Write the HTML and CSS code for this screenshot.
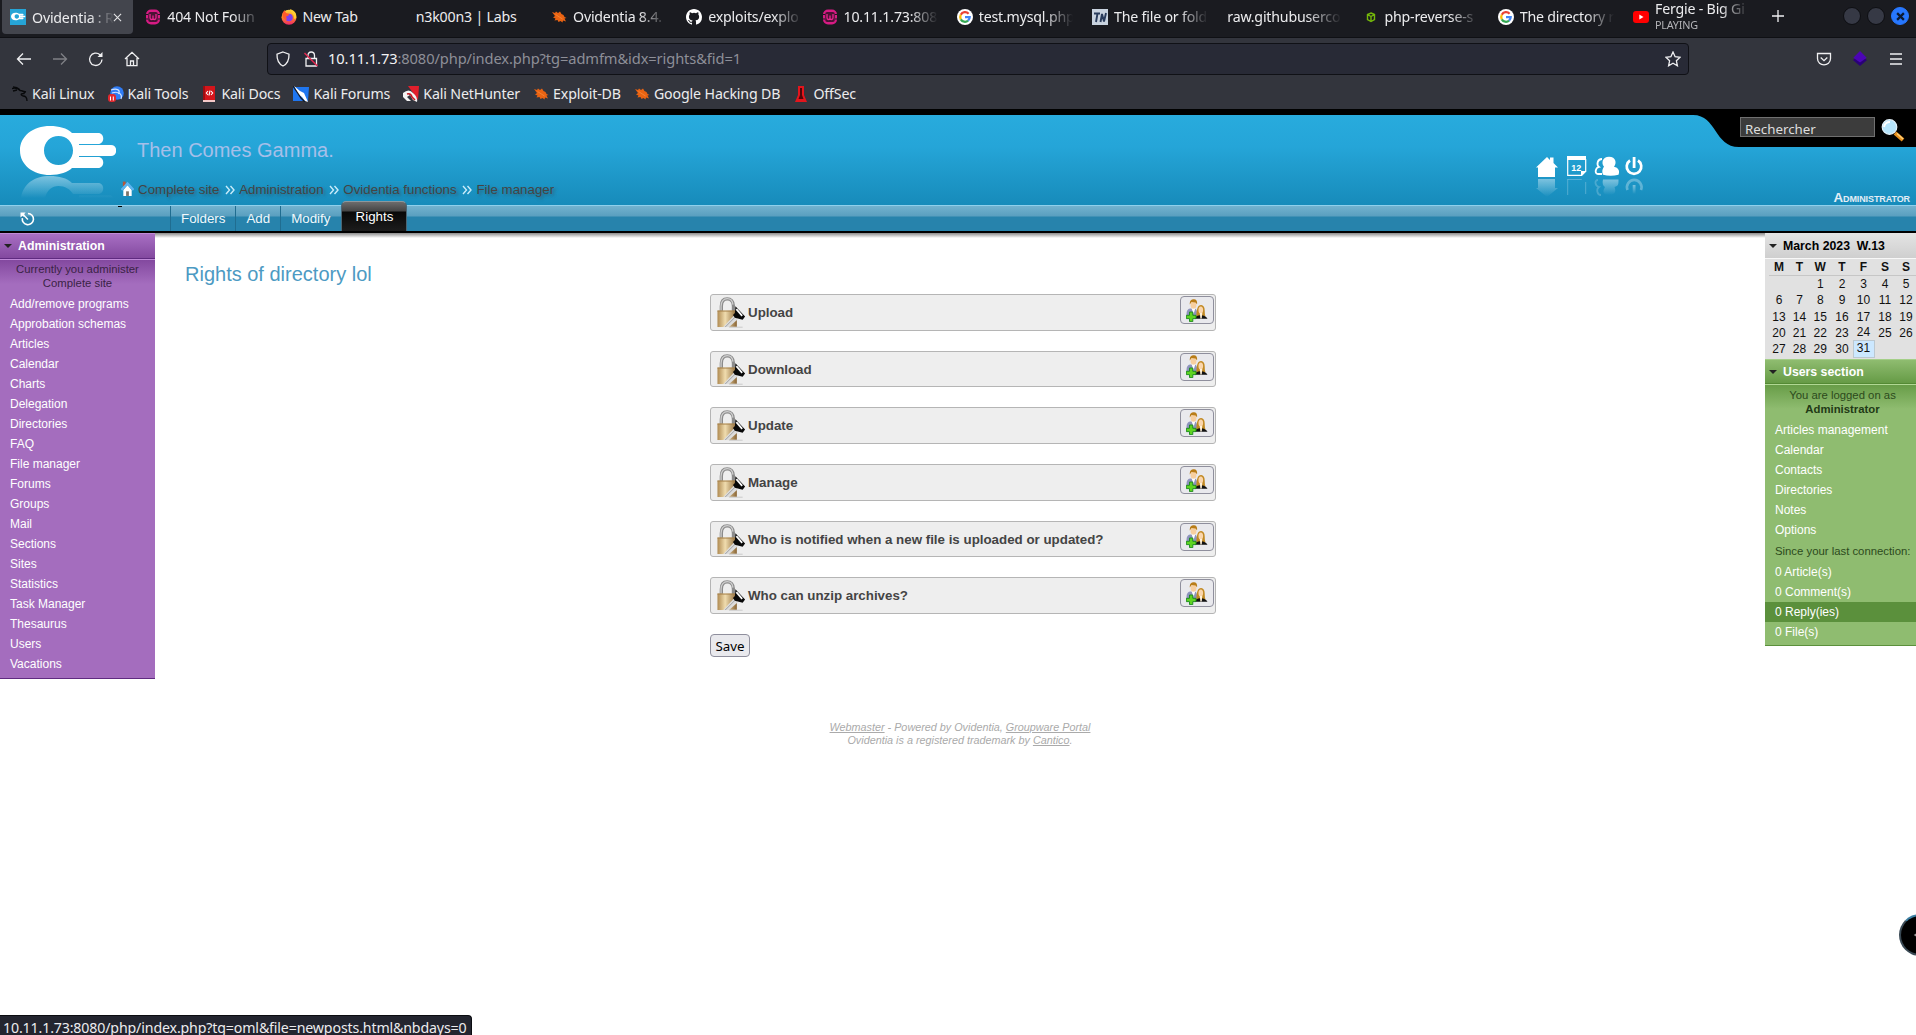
FILE: index.html
```html
<!DOCTYPE html>
<html lang="en">
<head>
<meta charset="utf-8">
<title>Ovidentia : Rights of directory lol</title>
<link rel="stylesheet" href="styles.css">
</head>
<body>
<svg class="defs" width="0" height="0" aria-hidden="true">
  <defs>
    <linearGradient id="brass" x1="0" x2="1"><stop offset="0" stop-color="#b08b52"/><stop offset=".4" stop-color="#f0dcae"/><stop offset="1" stop-color="#8a6534"/></linearGradient>
    <linearGradient id="fade" x1="0" x2="0" y1="0" y2="1"><stop offset="0" stop-color="#fff" stop-opacity=".42"/><stop offset="1" stop-color="#fff" stop-opacity="0"/></linearGradient>
    <linearGradient id="fox" x1="0" x2="0" y1="0" y2="1"><stop offset="0" stop-color="#ffd43a"/><stop offset=".5" stop-color="#ff8a1f"/><stop offset="1" stop-color="#f0246b"/></linearGradient>
    <symbol id="wamp" viewBox="0 0 16 16"><rect x="1" y=".5" width="14" height="15" rx="5" fill="#d81b84"/><path d="M0 5.500h3M0 10h3M13 5.500h3M13 10h3" stroke="#1a1b20" stroke-width="1"/><rect x="3.200" y="3" width="9.600" height="10" rx="2" fill="#4a1234"/><path d="M5 5v3.800q0 1.700 1.500 1.700T8 9V6.500V9q0 1.500 1.500 1.500T11 8.800V5" fill="none" stroke="#e8268f" stroke-width="1.300"/></symbol>
    <symbol id="bug" viewBox="0 0 16 16"><path d="M1 3l3 1 1-1.500L7 4l2-1.500L10.500 5l2 1 1 2 2 1-2 .5 1.500 3-3-1-.5 2-2-1.500-2 1-1-2-3 .5 1-2L2 8.500 4 7z" fill="#ea6312"/><path d="M4.500 5.500l7 4.500" stroke="#f98a3a" stroke-width=".8"/></symbol>
    <symbol id="google" viewBox="0 0 16 16"><circle cx="8" cy="8" r="8" fill="#fff"/><g fill="none" stroke-width="2.300"><path d="M11.600 4.700A4.800 4.800 0 0 0 3.800 5.800" stroke="#ea4335"/><path d="M3.800 5.800a4.800 4.800 0 0 0 0 4.600" stroke="#fbbc05"/><path d="M3.800 10.400a4.800 4.800 0 0 0 7.300 1.200" stroke="#34a853"/><path d="M11.100 11.600A4.800 4.800 0 0 0 12.700 8.100H8" stroke="#4285f4"/></g></symbol>
    <symbol id="lock" viewBox="0 0 30 32"><path d="M4 15V9.500C4 4.500 6.500 2 10 2s6.500 2.500 6.500 7.500V15" fill="none" stroke="#8b8b8b" stroke-width="3.400"/><path d="M3.700 14V9.500C3.700 4.500 6.500 1.800 10 1.800s5.500 2 6 6" fill="none" stroke="#cfcfcf" stroke-width="1.300"/><rect x="0" y="14" width="20" height="17" fill="url(#brass)"/><path d="M0 14.500h20" stroke="#a58149"/><path d="M6 31L17 19l4 4-9 8z" fill="#dcdcdc"/><path d="M8 31L19 20" stroke="#9d9d9d"/><path d="M18.500 9.500L28.500 20l-2.500 3.500-8-2-2-3 2-2z" fill="#080808"/><path d="M19.500 12.500l6 7" stroke="#fff" stroke-width="1.800"/><path d="M12 31.200h14" stroke="#cfcfcf" stroke-width="1.200"/></symbol>
    <symbol id="people" viewBox="0 0 22 23"><path d="M.5 15q0-5 3.500-5.500h4.500q2.500 0 2.500 5v4H.5z" fill="#8d93bd"/><path d="M5.500 9l2 6L9.500 9z" fill="#fff"/><ellipse cx="7.500" cy="6" rx="2.900" ry="3.800" fill="#f7cfa0"/><path d="M3.800 5.500C3.300 1 6-.2 8 .2c2.500 0 3.500 2.300 3 5L9.500 3.500 5.500 3z" fill="#b97d18"/><path d="M10 18.500c.8-2 0-6 1.300-9 1.700-5 6.500-4 7.200 0 .5 3 0 6 1 8z" fill="#c28a24"/><path d="M9 19.800q.5-3.300 5.500-3.500t7 3.500z" fill="#111"/><ellipse cx="14.800" cy="11" rx="2.300" ry="3.600" fill="#fad6ad"/><path d="M13.800 14h2.500l-.6 5.500h-1.300z" fill="#fff1da"/><path d="M3.500 13h3.300v3.300H10v3.300H6.800V22.600H3.500v-3H.3v-3.300h3.200z" fill="#5fd422" stroke="#16881a" stroke-width=".9"/></symbol>
    <symbol id="hand" viewBox="0 0 96 49"><path fill-rule="evenodd" d="M30 0C13 0 0 10 0 24.500S13 49 30 49c10 0 18-3 22-7h26c7 0 7-11 0-11H59v-1h32c7 0 7-11 0-11H59v-1h19c7 0 7-11 0-11H52C47 2 39 0 30 0zM38.500 10c8 0 14.500 6 14.500 14.500S46.500 39 38.500 39 24 33 24 24.500 30.500 10 38.500 10z"/></symbol>
    <symbol id="chev" viewBox="0 0 10 10"><path d="M1 1l3.500 4L1 9M5.500 1L9 5 5.500 9" fill="none" stroke="#c9ecfa" stroke-width="1.400"/></symbol>
  </defs>
</svg>

<div class="browser">
  <div class="tabstrip">
    <div class="tab active"><svg class="fav" viewBox="0 0 16 16"><path fill="#26a4d6" d="M0 0h16v16H0z"/><use href="#hand" x="1" y="3" width="14.500" height="9" fill="#fff"/></svg><span class="label">Ovidentia : R</span><svg class="close" viewBox="0 0 10 10"><path d="M1 1l8 8M9 1L1 9" stroke="#e4e4e6" stroke-width="1.200"/></svg></div>
    <div class="tab"><svg class="fav"><use href="#wamp"/></svg><span class="label">404 Not Foun</span></div>
    <div class="tab"><svg class="fav" viewBox="0 0 16 16"><circle cx="8" cy="8.300" r="7.500" fill="url(#fox)"/><circle cx="8" cy="8.500" r="3.800" fill="#7a3ff0"/><path d="M1.500 4l2-3 1.500 3 3.500 1-1.500 2-2 .5 1 3C3 11 1 8 1.500 4z" fill="#ff5a2c"/><path d="M9 0c5 1.500 7 5 6 9-1 2-2 1-2-1 0-3-3-4-4-8z" fill="#ffcf33"/></svg><span class="label full">New Tab</span></div>
    <div class="tab"><span class="label full wide">n3k00n3 | Labs</span></div>
    <div class="tab"><svg class="fav"><use href="#bug"/></svg><span class="label">Ovidentia 8.4.</span></div>
    <div class="tab"><svg class="fav" viewBox="0 0 16 16"><path fill="#fff" fill-rule="evenodd" d="M8 0C3.580 0 0 3.580 0 8c0 3.540 2.290 6.530 5.470 7.590.4.070.55-.17.55-.38v-1.490c-2.010.37-2.530-.49-2.690-.94-.09-.23-.48-.94-.82-1.130-.28-.15-.68-.52-.01-.53.63-.01 1.080.58 1.230.82.72 1.210 1.870.87 2.330.66.07-.52.28-.87.51-1.070-1.780-.2-3.640-.89-3.640-3.950 0-.87.31-1.590.82-2.150-.08-.2-.36-1.020.08-2.120 0 0 .67-.21 2.200.82a7.500 7.500 0 014 0c1.530-1.040 2.200-.82 2.200-.82.44 1.100.16 1.920.08 2.120.51.56.82 1.270.82 2.150 0 3.070-1.870 3.750-3.650 3.950.29.25.54.73.54 1.480v2.190c0 .21.15.46.55.38A8 8 0 0016 8c0-4.420-3.580-8-8-8z"/></svg><span class="label">exploits/explo</span></div>
    <div class="tab"><svg class="fav"><use href="#wamp"/></svg><span class="label">10.11.1.73:808</span></div>
    <div class="tab"><svg class="fav"><use href="#google"/></svg><span class="label">test.mysql.php</span></div>
    <div class="tab"><svg class="fav" viewBox="0 0 16 16"><path fill="#c9d3df" d="M0 0h16v16H0z"/><path d="M2 4.500h6M5.500 4.500L4 13M8.500 13l1.500-8 2 7.500L14 4" fill="none" stroke="#2a3c5c" stroke-width="1.900"/></svg><span class="label">The file or fold</span></div>
    <div class="tab"><span class="label wide">raw.githubuserco</span></div>
    <div class="tab"><svg class="fav" viewBox="0 0 16 16"><path d="M8 4l3.500 1.500v5L8 12.500l-3.500-2v-5zM4.500 5.500L8 7.500l3.500-2M8 7.500v5" fill="none" stroke="#74b80a" stroke-width="1.400"/></svg><span class="label">php-reverse-s</span></div>
    <div class="tab"><svg class="fav"><use href="#google"/></svg><span class="label">The directory r</span></div>
    <div class="tab"><svg class="fav" viewBox="0 0 16 16"><rect y="2" width="16" height="12" rx="3" fill="#f00"/><path d="M6.300 5.500L10.500 8l-4.200 2.500z" fill="#fff"/></svg><span class="label media">Fergie - Big Gi<small>PLAYING</small></span></div>
    <svg class="newtab" viewBox="0 0 14 14"><path d="M7 1v12M1 7h12" stroke="#f0f0f2" stroke-width="1.300"/></svg>
    <div class="winbtns"><i></i><i></i><i class="x"><svg viewBox="0 0 8 8"><path d="M1 1l6 6M7 1L1 7" stroke="#0c1a33" stroke-width="2"/></svg></i></div>
  </div>

  <div class="toolbar">
    <div class="navbtns">
      <svg viewBox="0 0 16 16"><path d="M15 8H1.500M7 2.500L1.500 8 7 13.500"/></svg>
      <svg class="off" viewBox="0 0 16 16"><path d="M1 8h13.500M9 2.500L14.500 8 9 13.500"/></svg>
      <svg viewBox="0 0 16 16"><path d="M14 8.500A6.200 6.200 0 1 1 12 3.700L13.500 5"/><path d="M14.500 1v5H9.500z" fill="#f0f0f2" stroke="none"/></svg>
      <svg viewBox="0 0 16 16"><path d="M1 8l7-6.700L15 8M3 7v7.700h10V7M6.500 14.500V10h3v4.500"/></svg>
    </div>
    <div class="urlbar">
      <svg viewBox="0 0 16 16"><path d="M8 1l6 2.200C14.200 9 12 13 8 15 4 13 1.800 9 2 3.200z"/></svg>
      <svg class="insecure" viewBox="0 0 16 16"><path d="M3 7.500h10.500V15H3zM5 7.500V4.500q0-3.500 3.200-3.500t3.300 3.500v3"/><path d="M1.500 2l13 13" class="slash"/></svg>
      <span class="url"><b>10.11.1.73</b>:8080/php/index.php?tg=admfm&amp;idx=rights&amp;fid=1</span>
      <svg class="star" viewBox="0 0 16 16"><path d="M8 1l2.100 4.700 5 .6-3.700 3.500 1 5L8 12.300l-4.400 2.500 1-5L.9 6.300l5-.6z"/></svg>
    </div>
    <div class="tools">
      <svg viewBox="0 0 16 16"><path d="M1.500 2.500h13v5c0 8.500-13 8.500-13 0zM4.700 6.500L8 9.700l3.300-3.200"/></svg>
      <svg viewBox="0 0 16 18"><path d="M8 5l8 5-8 7-8-7z" fill="#2a0078" stroke="none"/><path d="M8 0l7.500 7.500L8 13 .5 7.500z" fill="#4c05b5" stroke="none"/></svg>
      <svg viewBox="0 0 16 16"><path d="M2 3h12M2 8h12M2 13h12"/></svg>
    </div>
  </div>

  <div class="bookmarks">
    <a><svg viewBox="0 0 16 16"><path d="M0 2.500c4-1 6 0 8 2 3 0 5 2 4 3-3 0-4 1-1 2.500 3 0 4 2 4 5M1 .8c3 0 5 1 7 3M10 5l4 1M1 5l4-1" fill="none" stroke="#08090b" stroke-width="1.300"/></svg>Kali Linux</a>
    <a><svg viewBox="0 0 16 16"><circle cx="9" cy="7" r="6.800" fill="#2f7cf6"/><path d="M3 4c6-2 9 0 8 3 2 1 3 3 2 6M4 7c3-1 6-1 7 1" fill="none" stroke="#cfe2ff" stroke-width="1.200"/><rect y="8" width="8" height="8" rx="3" fill="#e0282e"/><path d="M2.500 10.500v4M5.300 10.500v4" stroke="#fff"/></svg>Kali Tools</a>
    <a><svg viewBox="0 0 16 16"><path d="M2 0h12v14H2z" fill="#d4151b"/><path d="M2 14h12v2H2z" fill="#f5c9c9"/><path d="M2 0h2v14H2z" fill="#9c0e12"/><path d="M7 5L5.300 7 7 9M10 5l1.700 2L10 9M9 4.500L8 9.500" fill="none" stroke="#fff" stroke-width="1.100"/></svg>Kali Docs</a>
    <a><svg viewBox="0 0 16 16"><path d="M0 1h16l-1 14H0z" fill="#1f76f0"/><path d="M1 0l6 5 4 2 4 9-3-1-3-4-4-3z" fill="#fff"/><path d="M0 0l4 6 4 6 4 4" fill="none" stroke="#111a28" stroke-width="1.300"/></svg>Kali Forums</a>
    <a><svg viewBox="0 0 16 16"><path d="M5 0h11l-1 14z" fill="#e11f2c"/><path d="M0 7q6-5 10 0 5 4 4 9l-4-2-3-5-3 2 4 4-4 0-4-4z" fill="#f4f4f4"/><path d="M4 8q4-1 5 3l3 3" fill="none" stroke="#c31924" stroke-width="1.600"/></svg>Kali NetHunter</a>
    <a><svg><use href="#bug"/></svg>Exploit-DB</a>
    <a><svg><use href="#bug"/></svg>Google Hacking DB</a>
    <a><svg viewBox="0 0 16 16"><path d="M5 0h6v9l3 7H2l3-7z" fill="#e3151c"/><path d="M7 2h2v7l1.500 4h-5L7 9z" fill="#4f060a"/></svg>OffSec</a>
  </div>
</div>

<header class="site">
  <svg class="logo" viewBox="0 0 98 75"><use href="#hand" width="96" height="49" fill="#fff"/><svg y="50" width="98" height="22" viewBox="0 0 98 22"><path fill="url(#fade)" fill-rule="evenodd" d="M1 22C3 8 14 0 30 0c9 0 17 2 22 7h26c7 0 7 11 0 11H53C50 13 45 10 38.500 10S27 14 25 22zM59 19.500h32l3 2.500H59z"/></svg></svg>
  <div class="ident">
    <div class="slogan">Then Comes Gamma.</div>
    <nav class="crumbs">
      <svg class="hm" viewBox="0 0 14 16"><path d="M2 0h3v5H2z" fill="#b5573a"/><path d="M2.500 9L7 4l4.500 5v6.500h-9z" fill="#fff"/><path d="M.5 9L7 2l6.500 7" fill="none" stroke="#5db4f0" stroke-width="2.400"/><path d="M5.500 10.500h3v5h-3z" fill="#7d7468"/></svg>
      <a>Complete site</a><svg><use href="#chev"/></svg><a>Administration</a><svg><use href="#chev"/></svg><a>Ovidentia functions</a><svg><use href="#chev"/></svg><a>File manager</a>
    </nav>
  </div>
  <svg class="shortcuts" viewBox="0 0 110 42">
    <g fill="#fff"><path d="M11 1l3 3V1.500h3.500V7L22 11.500h-3V21H2v-9.500H0z"/>
      <path d="M31 0h19v4H31z"/><path d="M31.700 3v16.300h14l4-4V3" fill="none" stroke="#fff" stroke-width="1.200"/><path d="M45 20v-5h5.500z"/><text x="35.300" y="15" class="day">12</text>
      <path d="M66 3c-5 0-5.500 6-3 8-4 1-4.500 7-1 7h4" fill="none" stroke="#fff" stroke-width="1.800"/><path d="M73 .7c7 0 8 6.500 5 10 4.500 1 6 4 4.500 8q-8 2-15.500 0c-1.500-4 0-6.500 1-8C65 7 66.500.7 73 .7z"/>
      <path d="M94 4.500a7.300 7.300 0 1 0 8 0" fill="none" stroke="#fff" stroke-width="2.700"/><path d="M96.700 1h2.800v11h-2.800z"/></g>
    <g fill="url(#fade)"><path d="M2 23h17v9h3L11 41 0 32h2z"/><path d="M31.700 23v16M49.700 26v12M31.700 23.500h14" stroke="#fff" stroke-opacity=".25" fill="none"/><path d="M67 23.500h15.500c0 5 0 6.500-4 7.500 2 5 0 8-5.500 8s-7-3-4-8c-2-1-3-4-2-7.500z"/><path d="M62 24c-4 0-3 6 1 7-3 2-2 8 2 8" fill="none" stroke="#fff" stroke-opacity=".2" stroke-width="1.800"/><path d="M91.500 34a7.300 7.300 0 1 1 13.500 0" fill="none" stroke="#fff" stroke-opacity=".3" stroke-width="2.700"/><path d="M96.700 29h2.800v9h-2.800z"/></g>
  </svg>
  <div class="account">
    <div class="search">
      <svg class="curve" viewBox="0 0 50 32"><path d="M0 0C24 0 21 32 46 32H50V0z"/></svg>
      <div class="field">Rechercher</div>
      <svg class="glass" viewBox="0 0 24 24"><path d="M14 14l8 7" stroke="#e8901d" stroke-width="4"/><path d="M16 14.500l6 5.500" stroke="#ffd37e" stroke-width="1.300"/><circle cx="8.500" cy="8" r="7.300" fill="#b5e4fb" stroke="#e4f2fa" stroke-width="1.200"/><path d="M3 8q1-5 6-5" fill="none" stroke="#fff" stroke-width="2"/></svg>
    </div>
    <div class="user">Administrator</div>
  </div>
</header>

<nav class="menu">
  <div class="history"><svg viewBox="0 0 15 15"><path d="M8 1.600A6 6 0 1 1 2 6.500" fill="none" stroke="#fff" stroke-width="1.700"/><path d="M0 .5h5.500L3.800 2.300 5 3.500 3.500 5 2.200 4 0 6z" fill="#fff"/><path d="M4 4l4 4" stroke="#fff" stroke-width="1.500"/></svg><i></i></div>
  <a>Folders</a><a>Add</a><a>Modify</a><a class="current">Rights</a>
</nav>

<div class="page">
  <aside class="section admin">
    <h2><i></i>Administration</h2>
    <div class="body">
      <p class="info">Currently you administer<br>Complete site</p>
      <ul>
        <li>Add/remove programs</li><li>Approbation schemas</li><li>Articles</li><li>Calendar</li><li>Charts</li><li>Delegation</li><li>Directories</li><li>FAQ</li><li>File manager</li><li>Forums</li><li>Groups</li><li>Mail</li><li>Sections</li><li>Sites</li><li>Statistics</li><li>Task Manager</li><li>Thesaurus</li><li>Users</li><li>Vacations</li>
      </ul>
    </div>
  </aside>

  <main>
    <h1>Rights of directory lol</h1>
    <form class="rights">
      <div class="acl"><svg class="lk"><use href="#lock"/></svg><span>Upload</span><div class="add"><svg><use href="#people"/></svg></div></div>
      <div class="acl"><svg class="lk"><use href="#lock"/></svg><span>Download</span><div class="add"><svg><use href="#people"/></svg></div></div>
      <div class="acl"><svg class="lk"><use href="#lock"/></svg><span>Update</span><div class="add"><svg><use href="#people"/></svg></div></div>
      <div class="acl"><svg class="lk"><use href="#lock"/></svg><span>Manage</span><div class="add"><svg><use href="#people"/></svg></div></div>
      <div class="acl"><svg class="lk"><use href="#lock"/></svg><span>Who is notified when a new file is uploaded or updated?</span><div class="add"><svg><use href="#people"/></svg></div></div>
      <div class="acl"><svg class="lk"><use href="#lock"/></svg><span>Who can unzip archives?</span><div class="add"><svg><use href="#people"/></svg></div></div>
      <div class="save">Save</div>
    </form>
    <footer><u>Webmaster</u> - Powered by Ovidentia, <u>Groupware Portal</u><br>Ovidentia is a registered trademark by <u>Cantico</u>.</footer>
  </main>

  <div class="rightcol">
    <section class="section cal">
      <h2><i></i>March 2023 &nbsp;W.13</h2>
      <div class="days head"><b>M</b><b>T</b><b>W</b><b>T</b><b>F</b><b>S</b><b>S</b></div>
      <div class="days">
        <span></span><span></span><span>1</span><span>2</span><span>3</span><span>4</span><span>5</span>
        <span>6</span><span>7</span><span>8</span><span>9</span><span>10</span><span>11</span><span>12</span>
        <span>13</span><span>14</span><span>15</span><span>16</span><span>17</span><span>18</span><span>19</span>
        <span>20</span><span>21</span><span>22</span><span>23</span><span class="lift">24</span><span>25</span><span>26</span>
        <span>27</span><span>28</span><span>29</span><span>30</span><span class="today">31</span><span></span><span></span>
      </div>
    </section>
    <section class="section users">
      <h2><i></i>Users section</h2>
      <div class="body">
        <p class="info">You are logged on as<br><b>Administrator</b></p>
        <ul><li>Articles management</li><li>Calendar</li><li>Contacts</li><li>Directories</li><li>Notes</li><li>Options</li></ul>
        <p class="since">Since your last connection:</p>
        <ul><li>0 Article(s)</li><li>0 Comment(s)</li><li class="hover">0 Reply(ies)</li><li>0 File(s)</li></ul>
      </div>
    </section>
  </div>
</div>

<div class="handle"><svg viewBox="0 0 8 10"><path d="M8 0v10L1 5z" fill="#999"/></svg></div>
<div class="status">10.11.1.73:8080/php/index.php?tg=oml&amp;file=newposts.html&amp;nbdays=0</div>
</body>
</html>
```
FILE: styles.css
```css
* { box-sizing: border-box; }
body { margin: 0; height: 1035px; overflow: hidden; position: relative; background: #fff; font-family: "Liberation Sans", Arial, sans-serif; font-size: 12px; }
h1, h2, p, ul { margin: 0; padding: 0; }
ul { list-style: none; }
svg { display: block; flex: none; }
.defs { position: absolute; }

/* browser window */
.browser { height: 109px; background: #33353d; color: #ececee; font: 14.2px "Noto Sans", sans-serif; letter-spacing: -.2px; }
.tabstrip { height: 38px; display: flex; background: #1a1b20; border-bottom: 1px solid #0f1014; padding-left: 2px; }
.tab { width: 135.25px; height: 33px; flex: none; display: flex; align-items: center; padding-left: 8px; }
.tab .fav { width: 16px; height: 16px; margin-right: 6px; }
.tab.active { width: 131px; margin-right: 4.25px; height: 34px; background: #43454d; border-radius: 0 0 4px 4px; }
.tab .label { width: 96px; height: 33px; line-height: 33px; white-space: nowrap; -webkit-mask-image: linear-gradient(90deg, #000 68%, transparent 98%); mask-image: linear-gradient(90deg, #000 68%, transparent 98%); }
.tab .label.wide { width: 117px; }
.tab .label.full { -webkit-mask-image: none; mask-image: none; }
.tab.active .label { width: 84px; }
.tab .close { width: 9px; height: 9px; margin-left: -3px; }
.tab .media { line-height: 17px; }
.media small { display: block; font-size: 10.800px; line-height: 15px; color: #b4b4b8; }
.newtab { width: 14px; height: 14px; margin: 9px 0 0 11px; }
.winbtns { margin: 7px 7px 0 auto; display: flex; gap: 6px; }
.winbtns i { width: 18px; height: 18px; border-radius: 50%; background: #363945; border: 1px solid #0d0e12; display: flex; align-items: center; justify-content: center; }
.winbtns .x { background: #2777ff; border-color: #2777ff; }
.winbtns svg { width: 9px; height: 9px; }

.toolbar { height: 40px; display: flex; align-items: center; padding-top: 1px; }
.toolbar svg { width: 16px; height: 16px; fill: none; stroke: #f0f0f2; stroke-width: 1.300; }
.navbtns { width: 267px; padding-left: 16px; display: flex; gap: 20px; }
.navbtns .off { opacity: .4; }
.urlbar { width: 1422px; height: 32px; margin-top: 1px; background: #282a36; border: 1px solid #101116; border-radius: 4px; display: flex; align-items: center; padding: 0 7px; }
.urlbar .insecure { margin: 0 9px 0 12px; }
.urlbar .slash { stroke: #e22850; stroke-width: 1.500; }
.url { color: #8e8f98; font-size: 14.67px; letter-spacing: -.1px; padding-bottom: 2px; }
.url b { color: #f2f2f4; font-weight: 400; }
.urlbar .star { margin-left: auto; }
.tools { display: flex; gap: 20px; margin-left: auto; padding-right: 12px; }

.bookmarks { height: 31px; display: flex; align-items: center; gap: 13px; padding-left: 12px; letter-spacing: -.14px; }
.bookmarks a { display: flex; align-items: center; gap: 4px; line-height: 20px; white-space: nowrap; }
.bookmarks svg { width: 16px; height: 16px; }

/* site header */
.site { height: 96px; border-top: 6px solid #000; background: linear-gradient(#28abdd 0%, #25a5d8 35%, #178bba 100%); display: flex; }
.logo { width: 98px; height: 75px; margin: 11px 0 0 20px; }
.ident { margin-left: 3px; flex: 1; }
.slogan { margin: 21px 0 0 16px; font-size: 20px; line-height: 28px; color: #a6bfe9; }
.crumbs { display: flex; align-items: center; margin-top: 17px; font-size: 13.330px; line-height: 18px; color: #444; text-shadow: 2px 2px 3px rgba(60, 60, 60, .45); white-space: nowrap; }
.crumbs svg { width: 10px; height: 10px; margin: 0 4px 0 5.700px; }
.crumbs .hm { width: 13px; height: 16px; margin: -3px 4px 0 0; }
.shortcuts { width: 110px; height: 42px; margin: 41px 0 0; }
.day { font: bold 9px "Liberation Sans", sans-serif; }
.account { width: 223px; margin-left: 47px; display: flex; flex-direction: column; justify-content: space-between; }
.search { display: flex; height: 32px; background: linear-gradient(#000, #000) 47px 0 no-repeat; }
.curve { width: 50px; height: 32px; margin-right: -3px; }
.field { width: 135px; height: 20px; margin-top: 2px; background: #3c3c3c; border: 1px solid #707070; color: #dedede; font: 13.330px/23px "Noto Sans", sans-serif; padding-left: 4px; }
.glass { width: 24px; height: 24px; margin: 4px 0 0 6px; }
.user { align-self: flex-end; padding: 0 6px 0 0; color: #e3eef6; font-size: 13.330px; line-height: 14px; font-weight: bold; font-variant: small-caps; letter-spacing: -.1px; }

.menu { height: 28px; border-top: 1px solid #8fd0ec; border-bottom: 2px solid #000; background: linear-gradient(#73b2cf 0, #5a9fbf 10px, #2783ac 11px); display: flex; align-items: flex-start; color: #f1f8fb; font-size: 13.330px; }
.history { width: 170px; height: 25px; padding: 6px 0 0 20px; position: relative; }
.history svg { width: 15px; height: 14px; }
.history i { position: absolute; left: 118px; top: 0; width: 4px; height: 1px; background: #000; }
.menu a { height: 25px; line-height: 26px; padding: 0 10px; border-left: 1px solid #206d90; white-space: nowrap; }
.menu .current { height: 30px; margin: -5px 0 0 1px; width: 66px; padding: 0; text-align: center; line-height: 29px; color: #fff; border: 1px solid #4a6675; border-top-color: #8d989d; border-bottom: 0; border-radius: 5px 5px 0 0; background: linear-gradient(#6c6c6c 0, #454545 9px, #080808 10px, #1c1c1c); }

/* columns */
.page { display: flex; align-items: flex-start; }
.section h2 { height: 26px; display: flex; align-items: center; font-size: 12.300px; padding-left: 4px; gap: 6px; white-space: nowrap; }
.section h2 i { border: 4px solid transparent; border-top-color: #222; border-bottom: 0; }
.section li { height: 20px; line-height: 20px; padding-left: 10px; color: #fff; white-space: nowrap; }
.info { font-size: 11.330px; line-height: 14px; text-align: center; }
.admin { width: 155px; background: #a46dbe; border-bottom: 1px solid #5f2a80; }
.admin h2 { color: #fff; background: linear-gradient(#a86fc3, #83499f); border-top: 1px solid #c08ad8; border-bottom: 1px solid #5f2a80; }
.admin .body { border-top: 1px solid #c08ad8; padding: 2px 0 4px; background: linear-gradient(#83499f, #a46dbe 24px); }
.admin .info { color: #3a2345; padding: 0 0 4px; }

main { flex: 1; align-self: stretch; background: linear-gradient(#8b8b8b, #fff 5px); }
h1 { font-size: 20px; font-weight: normal; line-height: 24px; color: #4c9ac3; margin: 29px 0 0 30px; }
.rights { width: 506px; margin: 8px 0 0 555px; display: flex; flex-direction: column; gap: 20px; }
.acl { height: 36.700px; border: 1px solid #b5b5b5; border-radius: 3px; background: #eee; display: flex; font-size: 13.330px; font-weight: bold; color: #444; padding: 1px 1px 0 6px; }
.acl span { line-height: 34px; margin-left: 1px; }
.lk { width: 30px; height: 31px; margin-top: 1px; }
.add { width: 34px; height: 28px; margin-left: auto; border: 1px solid #8f8f9d; border-radius: 4px; background: #e9e9ed; display: flex; align-items: center; justify-content: center; }
.add svg { width: 22px; height: 23px; }
.save { width: 40px; height: 23px; border: 1px solid #8f8f9d; border-radius: 4px; background: #e9e9ed; font: 13.330px/22px "Noto Sans", sans-serif; text-align: center; color: #000; }
footer { margin: 64px 0 0 0; text-align: center; font-size: 10.800px; font-style: italic; line-height: 13px; color: #aaa; }

.rightcol { width: 151px; }
.cal { background: #e1e1e1; height: 126px; }
.cal h2 { color: #000; background: linear-gradient(#e4e4e4, #cfcfcf); border-bottom: 1px solid #f8f8f8; }
.days { display: grid; grid-template-columns: 21px 20px 21.500px 22px 21px 22px 20px; grid-template-rows: repeat(5, 16.300px); margin-left: 3.500px; text-align: center; line-height: 16px; color: #111; }
.days.head { grid-template-rows: 16px; line-height: 17px; border-bottom: 1px solid #c6c6c6; }
.days .lift { line-height: 15px; }
.days .today { background: #cce8ff; border: 1px solid #bcc8d0; height: 18px; line-height: 15px; margin: -1px -.5px 0; }
.users { background: #8fbc70; border-bottom: 1px solid #5b903c; }
.users h2 { height: 25px; color: #fff; background: linear-gradient(#8fbc70, #669b46); border-top: 1px solid #a4cf88; border-bottom: 1px solid #548a34; }
.users .body { border-top: 1px solid #b0d893; padding: 3px 0; background: linear-gradient(#689d48, #8fbc70 24px); }
.users .info { padding-left: 4px; color: #2c4a1c; padding-bottom: 4px; }
.users .info b { color: #223a16; }
.since { font-size: 11.330px; line-height: 22px; padding-left: 10px; color: #2c4a1c; white-space: nowrap; }
.section .hover { background: #5b903c; }

.handle { position: absolute; left: 1899px; top: 914px; width: 42px; height: 42px; border-radius: 50%; background: #000; border: 2px solid #3a4a55; border-top-color: #3d7fa3; display: flex; align-items: center; padding-left: 12px; }
.handle svg { width: 6px; height: 8px; }
.status { position: absolute; left: 0; bottom: 0; width: 472px; height: 20px; background: #23252f; border: 1px solid #0b0c10; border-width: 1px 1px 0 0; border-radius: 0 4px 0 0; color: #ececee; font: 14.2px/24px "Noto Sans", sans-serif; letter-spacing: -.15px; padding-left: 3px; white-space: nowrap; }
```
